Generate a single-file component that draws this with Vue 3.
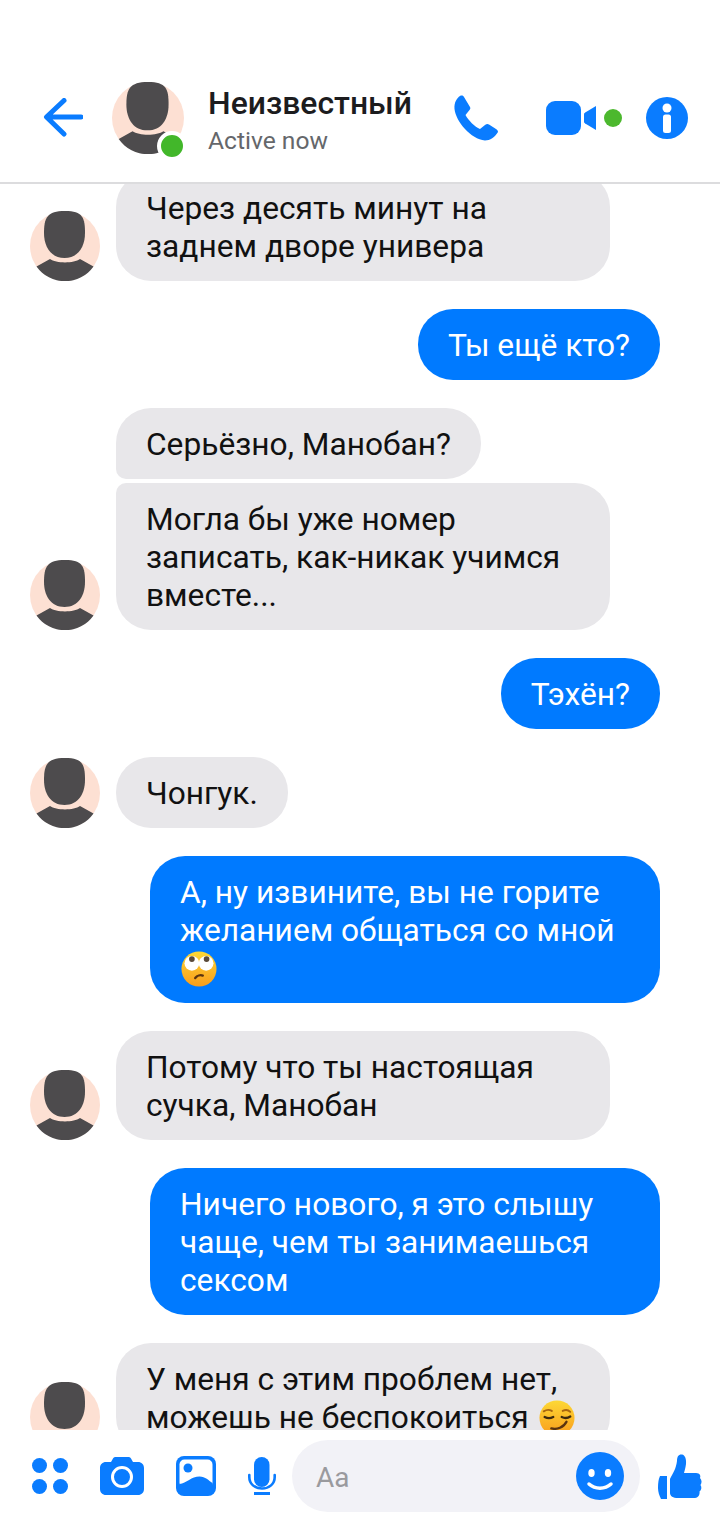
<template>
  <div class="screen">
    <header class="topbar">
      <svg class="back" viewBox="0 0 40 40" width="40" height="40">
        <path d="M38 19H4M21 2.500 3.500 19 21 36" fill="none" stroke="#0a7cff" stroke-width="5" stroke-linecap="round" stroke-linejoin="round" />
      </svg>
      <div class="head-avatar">
        <svg viewBox="0 0 70 70" width="72" height="72">
          <circle cx="35" cy="35" r="35" fill="#fde0d3" />
          <path d="M14 22C14 7 17 0 35 0s20 7 20 22c0 14-7 25-20.500 25S14 36 14 22Z" fill="#4d4b4d" />
          <path d="M6.500 55.500 20 48c6 4.500 24 4.500 30 0l13.500 7.500a35 35 0 0 1-57 0Z" fill="#4d4b4d" />
        </svg>
        <span class="online"></span>
      </div>
      <div class="who">
        <div class="name">Неизвестный</div>
        <div class="status">Active now</div>
      </div>
      <svg class="phone" viewBox="0 0 44 46" width="44" height="46">
        <path d="M6 1C3 3 0 7 .5 14 2 27 17 44 31 45.500c5 0 10-3.500 13-8.500 0-1-.5-2-2-3l-7-4.500c-1.500-1-2.500-.5-4 .5l-5 4C21 32 14 25 11.500 20l4-5c1-1 1-2 .5-3L10 2C9 .5 7.500.3 6 1Z" fill="#0a7cff" />
      </svg>
      <svg class="video" viewBox="0 0 50 34" width="50" height="34">
        <rect width="35" height="34" rx="9" fill="#0a7cff" />
        <path d="M38 13.500c0-1 .5-1.500 1.200-2L50 5v24l-10.800-6.500c-.7-.5-1.200-1-1.200-2Z" fill="#0a7cff" />
      </svg>
      <span class="video-dot"></span>
      <svg class="info" viewBox="0 0 42 42" width="42" height="42">
        <circle cx="21" cy="21" r="21" fill="#0a7cff" />
        <circle cx="21" cy="11" r="4.500" fill="#fff" />
        <rect x="17" y="17.500" width="8" height="18.500" rx="2.500" fill="#fff" />
      </svg>
    </header>

    <main class="chat">
      <svg class="defs" width="0" height="0">
        <defs>
          <linearGradient id="emojiFill" x1="0" y1="0" x2="0" y2="1">
            <stop offset="0" stop-color="#fdd835" />
            <stop offset="1" stop-color="#f99d1c" />
          </linearGradient>
        </defs>
      </svg>
      <div v-for="(m, i) in messages" :key="i" class="row" :class="m.mine ? 'mine' : 'theirs'">
        <svg v-if="!m.mine" class="avatar" :class="{ hidden: !m.avatar }" viewBox="0 0 70 70" width="70" height="70">
          <circle cx="35" cy="35" r="35" fill="#fde0d3" />
          <path d="M14 22C14 7 17 0 35 0s20 7 20 22c0 14-7 25-20.500 25S14 36 14 22Z" fill="#4d4b4d" />
          <path d="M6.500 55.500 20 48c6 4.500 24 4.500 30 0l13.500 7.500a35 35 0 0 1-57 0Z" fill="#4d4b4d" />
        </svg>
        <div class="bubble" :class="m.shape">
          {{ m.text }}
          <svg v-if="m.emoji === 'roll'" class="emoji" viewBox="0 0 38 38" width="36" height="36">
            <circle cx="19" cy="19" r="18.500" fill="url(#emojiFill)" />
            <circle cx="11.500" cy="13" r="7.800" fill="#fff" />
            <circle cx="26.500" cy="13" r="7.800" fill="#fff" />
            <circle cx="11.500" cy="8.500" r="3" fill="#5a4a3a" />
            <circle cx="27" cy="8.500" r="3" fill="#5a4a3a" />
            <path d="M15 28.500c2-2.500 5.500-3.500 8-2.500" fill="none" stroke="#5b3410" stroke-width="2.500" stroke-linecap="round" />
          </svg>
          <svg v-if="m.emoji === 'smirk'" class="emoji smirk" viewBox="0 0 38 38" width="36" height="36">
            <circle cx="19" cy="19" r="18.500" fill="url(#emojiFill)" />
            <path d="M5 12c3-2 6-2 8.500-.5M25 11.500c3-1.500 6-1 8 1" fill="none" stroke="#a8660f" stroke-width="2" stroke-linecap="round" />
            <path d="M6 18c3 1.500 6 1.500 9 0M24 18c3 1.500 6 1.500 9-.5" fill="none" stroke="#3d2a0e" stroke-width="2.500" stroke-linecap="round" />
            <path d="M13 30c6 1.500 13-1 16-7" fill="none" stroke="#5b3410" stroke-width="2.500" stroke-linecap="round" />
          </svg>
        </div>
      </div>
    </main>

    <footer class="composer">
      <svg class="apps" viewBox="0 0 36 36" width="36" height="36">
        <circle cx="7.500" cy="7.500" r="7.500" fill="#0a7cff" />
        <circle cx="28.500" cy="7.500" r="7.500" fill="#0a7cff" />
        <circle cx="7.500" cy="28.500" r="7.500" fill="#0a7cff" />
        <circle cx="28.500" cy="28.500" r="7.500" fill="#0a7cff" />
      </svg>
      <svg class="camera" viewBox="0 0 44 38" width="44" height="38">
        <path d="M6 5h5l2-3.500C13.600.5 14.500 0 15.500 0h13c1 0 1.900.5 2.500 1.500L33 5h5c3.500 0 6 2.500 6 6v21c0 3.500-2.500 6-6 6H6c-3.500 0-6-2.500-6-6V11c0-3.500 2.500-6 6-6Z" fill="#0a7cff" />
        <circle cx="22" cy="20" r="9.500" fill="none" stroke="#fff" stroke-width="3" />
      </svg>
      <svg class="image" viewBox="0 0 40 40" width="40" height="40">
        <rect width="40" height="40" rx="8" fill="#0a7cff" />
        <rect x="3.500" y="3.500" width="33" height="28" rx="5" fill="#fff" />
        <circle cx="12" cy="12" r="4.500" fill="#0a7cff" />
        <path d="M3.500 28c7-1 12-7.500 20-7.500 6 0 9 4 13 6.500v8h-33Z" fill="#0a7cff" />
      </svg>
      <svg class="mic" viewBox="0 0 28 38" width="28" height="38">
        <rect x="6" width="15.500" height="30" rx="7.750" fill="#0a7cff" />
        <path d="M1.300 18v2c0 7 5.500 11.500 12.700 11.500S26.700 27 26.700 20v-2" fill="none" stroke="#0a7cff" stroke-width="2.600" stroke-linecap="round" />
        <rect x="6" y="35" width="16" height="3" fill="#0a7cff" />
      </svg>
      <div class="input">
        <span class="placeholder">Aa</span>
        <svg viewBox="0 0 48 48" width="48" height="48">
          <circle cx="24" cy="24" r="24" fill="#0a7cff" />
          <ellipse cx="15.500" cy="21" rx="3.200" ry="4" fill="#fff" />
          <ellipse cx="32" cy="21" rx="3.200" ry="4" fill="#fff" />
          <path d="M13 32c6 5.500 16 5.500 22 0" fill="none" stroke="#fff" stroke-width="3.500" stroke-linecap="round" />
        </svg>
      </div>
      <svg class="like" viewBox="0 0 44 46" width="44" height="46">
        <path d="M2 23h7v23H3c-1.500-3-3-7-3-11 0-5 .5-9 2-12Z" fill="#0a7cff" />
        <path d="M12 26c3-6 6-10 7-18 0-5 2-7 5-6.500 3 .5 4.500 4.500 4 9.500-.5 4-1.500 7-2 9h12c4 0 5 3 4 5 2 2 2 5 .5 7 1.500 2 1 5-1 6.500.5 2.500-1 6.500-4.500 6.500H20c-5 0-8-2-8-5Z" fill="#0a7cff" />
      </svg>
    </footer>
  </div>
</template>

<script setup>
const messages = [
  { text: 'Через десять минут на заднем дворе универа', avatar: true },
  { text: 'Ты ещё кто?', mine: true },
  { text: 'Серьёзно, Манобан?', shape: 'tail-bottom' },
  { text: 'Могла бы уже номер записать, как-никак учимся вместе...', avatar: true, shape: 'tail-top' },
  { text: 'Тэхён?', mine: true },
  { text: 'Чонгук.', avatar: true },
  { text: 'А, ну извините, вы не горите желанием общаться со мной', mine: true, emoji: 'roll' },
  { text: 'Потому что ты настоящая сучка, Манобан', avatar: true },
  { text: 'Ничего нового, я это слышу чаще, чем ты занимаешься сексом', mine: true },
  { text: 'У меня с этим проблем нет, можешь не беспокоиться', avatar: true, emoji: 'smirk' }
]
</script>

<style>
html, body { margin: 0; background: #fff; }
</style>

<style scoped>
.screen {
  width: 720px;
  height: 1520px;
  display: flex;
  flex-direction: column;
  overflow: hidden;
  background: #fff;
  font-family: Roboto, "Liberation Sans", sans-serif;
  color: #111;
}
.topbar {
  flex: none;
  height: 72px;
  padding: 82px 0 28px 43px;
  display: flex;
  align-items: center;
  border-bottom: 2px solid #dcdcde;
}
.back { flex: none; margin-right: 29px; }
.head-avatar { position: relative; width: 72px; height: 72px; flex: none; margin-right: 24px; }
.head-avatar svg { display: block; }
.online {
  position: absolute;
  left: 45px;
  top: 49px;
  width: 22px;
  height: 22px;
  border-radius: 50%;
  background: #42b72a;
  border: 4px solid #fff;
}
.who { width: 246px; flex: none; margin-top: 8px; }
.name { font-size: 31.9px; font-weight: 500; line-height: 38px; color: #1c1c1e; }
.status { font-size: 24.6px; line-height: 38px; color: #65676b; }
.phone { flex: none; margin-right: 48px; }
.video { flex: none; margin-right: 8px; }
.video-dot { flex: none; width: 18px; height: 18px; border-radius: 50%; background: #4cb82e; margin-right: 24px; }
.info { flex: none; }

.chat {
  flex: 1;
  min-height: 0;
  overflow: hidden;
  display: flex;
  flex-direction: column;
  gap: 28px;
  padding: 0 60px 0 30px;
}
.defs { position: absolute; }
.row { display: flex; flex: none; align-items: flex-end; }
.row:nth-child(2) { margin-top: -12px; }
.row:nth-child(5) { margin-top: -24px; }
.row.mine { justify-content: flex-end; }
.avatar { flex: none; margin-right: 16px; display: block; }
.avatar.hidden { visibility: hidden; height: 0; }
.bubble {
  box-sizing: border-box;
  max-width: 494px;
  padding: 18px 30px 15px;
  border-radius: 35px;
  font-size: 31.7px;
  line-height: 38px;
  background: #e8e7ea;
  color: #111;
}
.mine .bubble { max-width: 510px; background: #007aff; color: #fff; }
.bubble.tail-bottom { border-bottom-left-radius: 10px; }
.bubble.tail-top { border-top-left-radius: 10px; }
.emoji { vertical-align: -8px; margin-left: 1px; }
.emoji.smirk { margin-left: 3px; }

.composer {
  flex: none;
  height: 90px;
  box-sizing: border-box;
  padding: 2px 0 0 32px;
  display: flex;
  align-items: center;
  background: #fff;
}
.apps { flex: none; margin-right: 32px; }
.camera { flex: none; margin-right: 32px; }
.image { flex: none; margin-right: 32px; }
.mic { flex: none; margin-right: 16px; }
.input {
  flex: none;
  width: 348px;
  height: 72px;
  box-sizing: border-box;
  padding: 0 16px 0 24px;
  border-radius: 36px;
  background: #f2f2f7;
  display: flex;
  align-items: center;
  justify-content: space-between;
  margin-right: 18px;
}
.placeholder { font-size: 28px; color: #9a9a9e; padding-top: 3px; }
.like { flex: none; }
</style>
